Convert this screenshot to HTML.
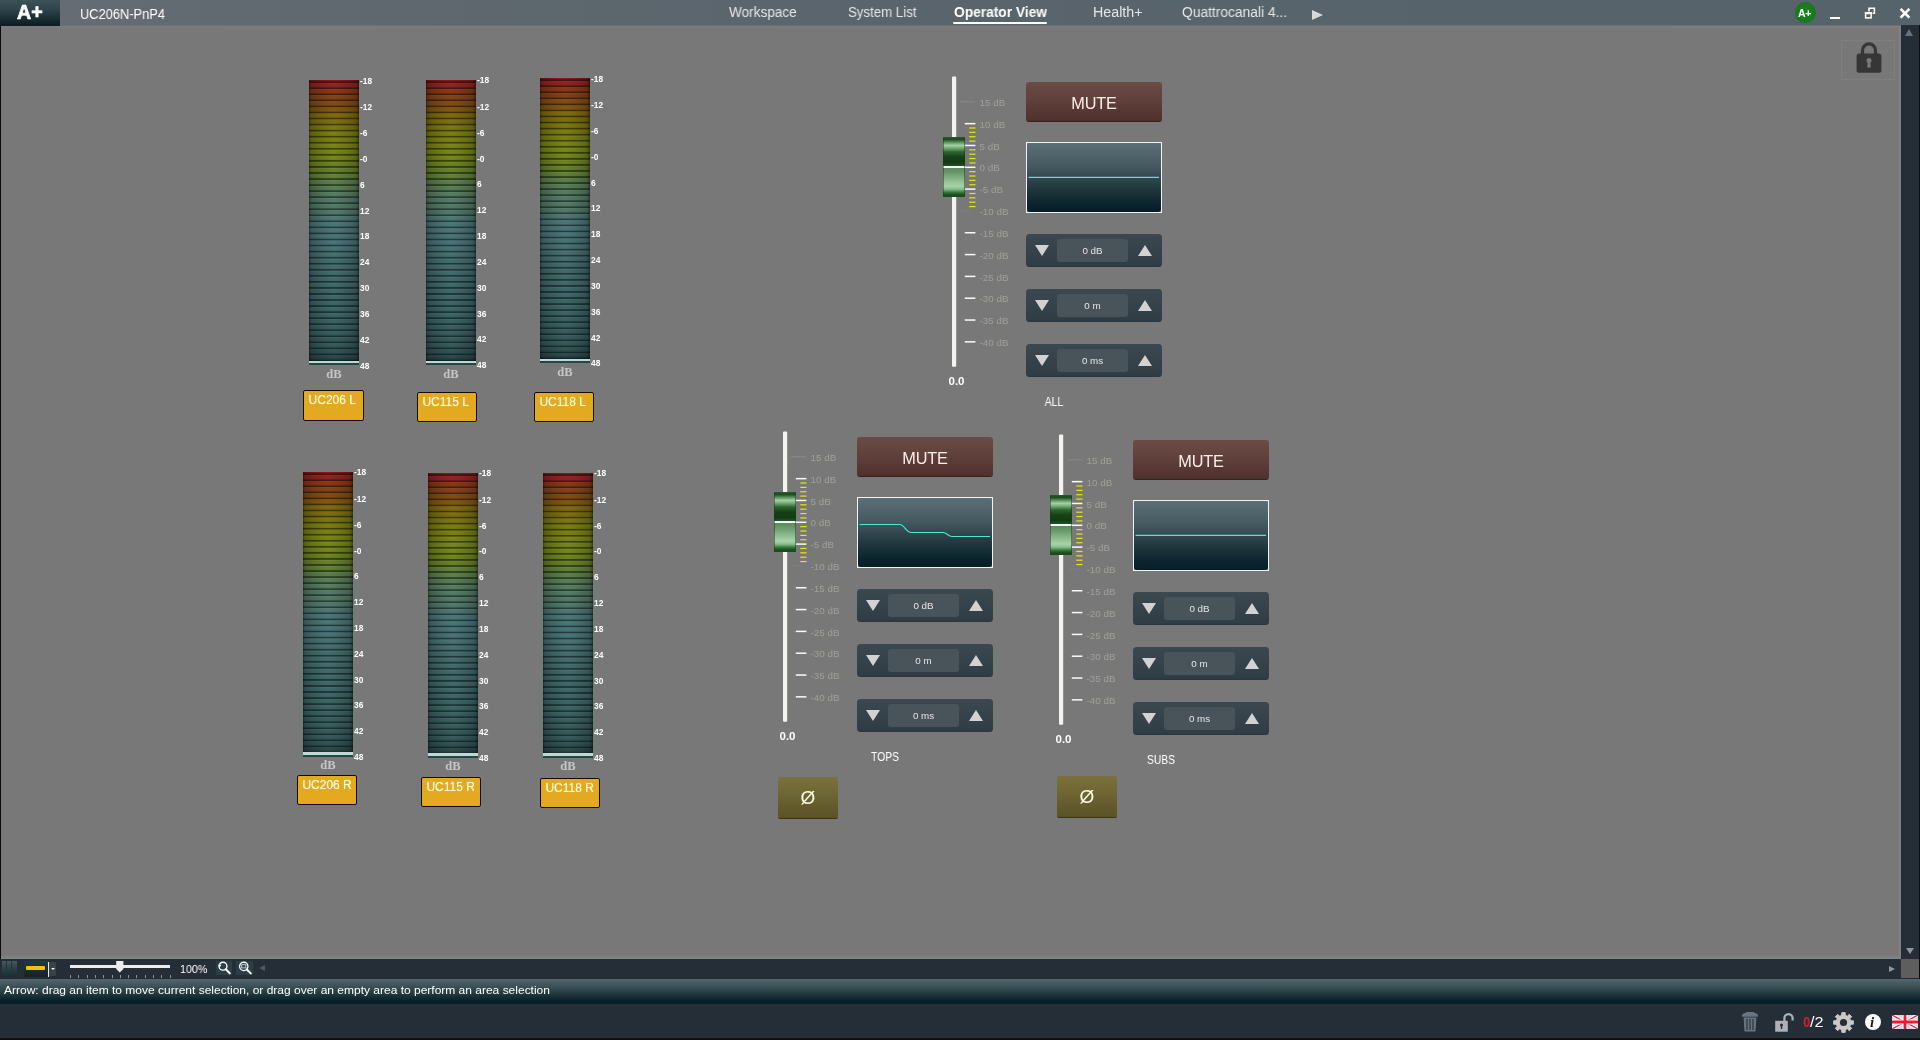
<!DOCTYPE html>
<html><head><meta charset="utf-8"><title>Operator View</title>
<style>
*{margin:0;padding:0;box-sizing:border-box}
html,body{width:1920px;height:1040px;overflow:hidden;background:#787878;font-family:"Liberation Sans",sans-serif;}
.abs,.t{position:absolute}
.t{white-space:nowrap;line-height:1;transform-origin:0 0;color:#fff;will-change:transform}
#t_logo{-webkit-text-stroke:.7px #fff}
#root{position:absolute;left:0;top:0;width:1920px;height:1040px;will-change:transform}
#topbar{position:absolute;left:0;top:0;width:1920px;height:25px;box-shadow:0 1px 0 #6a7174;background:linear-gradient(90deg,#666d74 0,#5f686f 400px,#59646c 900px,#56636b 1920px);}
#logo{position:absolute;left:0;top:0;width:60px;height:26px;background:linear-gradient(180deg,#3d5359 0,#2c4248 40%,#14282e 80%,#0c1c22 100%);}
#leftedge{position:absolute;left:0;top:26px;width:1px;height:1014px;background:#0a0a0a}
#vscroll{position:absolute;left:1901.4px;top:25px;width:18.6px;height:934px;background:#252d37}
#zoombar{position:absolute;left:0;top:959px;width:1901px;height:20px;background:#252d37}
#corner{position:absolute;left:1901px;top:959px;width:19px;height:20px;background:#5e5e5e}
#status{position:absolute;left:0;top:979px;width:1920px;height:25px;background:linear-gradient(180deg,#57676d 0,#4e6067 8%,#3e5459 26%,#2a4046 50%,#1a3238 66%,#0a222a 85%,#081e26 96%,#0c2028 100%);box-shadow:0 -1px 0 #1f2a33}
#bottom{position:absolute;left:0;top:1004px;width:1920px;height:36px;background:#252d37}
.meter{position:absolute;width:50px;height:285px;}
.meter .body{position:absolute;left:0;top:0;width:50px;height:285px;
 background:
  linear-gradient(90deg,rgba(0,0,0,.55) 0,rgba(0,0,0,.30) 3%,rgba(0,0,0,.22) 8%,rgba(0,0,0,.12) 22%,rgba(0,0,0,.04) 38%,rgba(0,0,0,0) 50%,rgba(0,0,0,.04) 62%,rgba(0,0,0,.12) 78%,rgba(0,0,0,.22) 92%,rgba(0,0,0,.32) 96%,rgba(0,0,0,.55) 100%),
  repeating-linear-gradient(180deg,rgba(0,0,0,0) 0,rgba(0,0,0,.04) 1px,rgba(0,12,8,.52) 1.8px,rgba(0,12,8,.52) 2.7px,rgba(255,255,255,.04) 3.4px,rgba(255,255,255,.03) 4px,rgba(0,0,0,0) 4.6px,rgba(0,0,0,0) 6.05px),
  linear-gradient(180deg,#8a1616 0,#902222 1.4%,#8e2620 2.5%,#8e3612 3.9%,#84401a 6%,#844a16 8%,#845410 10.2%,#826a0c 12.3%,#7e6e0e 14.4%,#7e760e 16.5%,#7c7c10 18.6%,#7a8010 20.7%,#7a8414 22.8%,#788616 24.9%,#768618 27%,#70841e 29.1%,#6a8228 31.2%,#648232 33.3%,#5e8044 35.4%,#5a7e54 37.5%,#567c64 41%,#52786a 46.2%,#4c7678 50.4%,#4a7478 54.6%,#487274 58.8%,#446c6e 63.7%,#40686a 73.5%,#3c6466 82.3%,#3a5e60 87%,#36585a 93%,#2e4e50 96.5%,#243e40 98.2%,#243e40 100%);
}
.meter .wl{position:absolute;left:0;top:280.6px;width:50px;height:2.2px;background:#c2d6d6}
.meter .bl{position:absolute;left:0;top:282.8px;width:50px;height:2.2px;background:#1f4846}
.mlab{position:absolute;font-weight:bold;font-size:8.4px;color:#fff;line-height:8px;white-space:nowrap}
.db{position:absolute;font-family:"Liberation Serif",serif;font-weight:bold;font-size:12.5px;color:#c6c6c6;line-height:1;width:50px;text-align:center}
.nm{position:absolute;width:60px;height:30px;background:#e2a921;border:1.3px solid #140c08;border-radius:2px;color:#fffcdc;font-size:12px;line-height:1;padding:3.2px 0 0 4.4px;white-space:nowrap;text-shadow:0 0 1px rgba(255,250,200,.6)}
.grp{position:absolute;left:0;top:0}
.track{position:absolute;left:952px;top:76.5px;width:4px;height:290px;background:#f4f4ee;border-radius:1px}
.tick{position:absolute;left:965px;width:10.5px;height:1.6px;background:#f8f8f8}
.tickf{position:absolute;left:960px;width:15px;height:1px;background:#848484}
.ytick{position:absolute;left:970px;width:5.5px;height:1.4px;background:#e6e600}
.slab{position:absolute;left:979.4px;font-size:9.8px;color:#a0a09a;line-height:1;white-space:nowrap;letter-spacing:.05px}
.knob{position:absolute;left:943px;top:137px;width:22px;height:60px;border-radius:1px;
 background:linear-gradient(180deg,#2a5a2c 0,#1c4a1e 4%,#6aa06c 10%,#a4d0a4 14%,#7ab07c 18%,#2c6430 25%,#174218 33%,#123a14 42%,#1f5222 48%,#f8f8f8 48.5%,#f8f8f8 52%,#5c8c5e 52.5%,#6a9a6c 60%,#8cbc8e 72%,#a8d2a8 82%,#8abc8c 87%,#3a7a3e 92%,#1c5220 96%,#174a1a 100%);
 box-shadow:inset 1px 0 0 rgba(20,60,20,.5),inset -1px 0 0 rgba(20,60,20,.5)}
.mute{position:absolute;left:1026px;top:82px;width:136px;height:39.5px;border-radius:3px;background:linear-gradient(180deg,#6a4b45 0,#5e3f3a 50%,#4f312d 96%,#2c1a18 100%);color:#ffeee8;font-size:16.3px;text-align:center;line-height:43px;letter-spacing:-.2px}
.graph{position:absolute;left:1026px;top:142px;width:136px;height:71px;border:1px solid #f2f2f2;background:#787878}
.graph i{position:absolute;left:0;top:0;right:0;bottom:0;border-radius:3px;background:linear-gradient(180deg,#5b6f76 0,#43585f 35%,#22383f 65%,#0a222b 90%,#081e27 100%)}
.graph svg{position:absolute;left:0;top:0}
.spin{position:absolute;left:1026px;width:136px;height:33px;border-radius:3.5px;background:linear-gradient(180deg,#3b4850 0,#35424a 50%,#313d45 94%,#29343c 100%)}
.spin b{position:absolute;left:31px;top:5px;width:71px;height:23px;border-radius:3px;background:#49535a;font-weight:normal;color:#e6e6e6;font-size:9.8px;text-align:center;line-height:24px}
.spin .dn{position:absolute;left:8.6px;top:10.5px;width:0;height:0;border-left:7.1px solid transparent;border-right:7.1px solid transparent;border-top:11.8px solid #d2d2d2}
.spin .up{position:absolute;left:112px;top:10.5px;width:0;height:0;border-left:7px solid transparent;border-right:7px solid transparent;border-bottom:11.5px solid #d2d2d2}
.val{position:absolute;font-weight:bold;font-size:11.5px;color:#fff;line-height:1}
.gname{position:absolute;font-size:12px;color:#fff;line-height:1;width:100px;text-align:center;transform:scaleX(.86);will-change:transform}
.phase{position:absolute;width:60px;height:41px;border-radius:2px;background:linear-gradient(180deg,#7a713c 0,#6f6634 40%,#5a5126 100%);box-shadow:0 1px 0 #3a3418;color:#fffbe6;font-size:19px;text-align:center;line-height:41px}
</style></head>
<body>
<div id="root">
<div id="topbar"></div><div id="logo"></div><div id="leftedge"></div>
<div id="zoombar"></div><div id="corner"></div><div id="status"></div><div id="bottom"></div>
<div class="t" id="t_logo" style="left:17.2px;top:2.8px;font-size:19.4px;font-weight:bold;color:#fff;transform:scaleX(1.0107)">A+</div>
<div class="t" id="t_title" style="left:80px;top:7px;font-size:14px;font-weight:normal;color:#fff;transform:scaleX(0.9178)">UC206N-PnP4</div>
<div class="t" id="t_ws" style="left:729px;top:4.5px;font-size:14px;font-weight:normal;color:#e4e7ea;transform:scaleX(0.9702)">Workspace</div>
<div class="t" id="t_sl" style="left:847.5px;top:4.5px;font-size:14px;font-weight:normal;color:#e4e7ea;transform:scaleX(0.9467)">System List</div>
<div class="t" id="t_ov" style="left:954px;top:4.5px;font-size:14px;font-weight:bold;color:#fff;transform:scaleX(0.9823)">Operator View</div>
<div class="t" id="t_hp" style="left:1093px;top:4.5px;font-size:14px;font-weight:normal;color:#e4e7ea;transform:scaleX(1.0173)">Health+</div>
<div class="t" id="t_q4" style="left:1181.7px;top:4.5px;font-size:14px;font-weight:normal;color:#e4e7ea;transform:scaleX(0.9848)">Quattrocanali 4...</div>
<div class="t" id="t_pct" style="left:180.3px;top:964px;font-size:11.5px;font-weight:normal;color:#fff;transform:scaleX(0.9279)">100%</div>
<div class="t" id="t_stat" style="left:4.4px;top:985.4px;font-size:11.5px;font-weight:normal;color:#fff;transform:scaleX(1.0429)">Arrow: drag an item to move current selection, or drag over an empty area to perform an area selection</div>
<div class="abs" style="left:953px;top:22.3px;width:94px;height:2px;background:#fff;border-radius:1px"></div>
<div class="abs" style="left:1312px;top:9.8px;width:0;height:0;border-top:5.2px solid transparent;border-bottom:5.2px solid transparent;border-left:11.2px solid #d6d8dc"></div>
<div class="abs" style="left:1794.5px;top:2px;width:21px;height:21px;border-radius:50%;background:radial-gradient(circle,#1c8422 0,#197a1e 60%,#146318 100%)"></div>
<div class="t" style="left:1798.3px;top:8px;font-size:10.5px;font-weight:bold;letter-spacing:-.3px">A+</div>
<div class="abs" style="left:1830px;top:16.5px;width:10px;height:2.5px;background:#fff"></div>
<svg class="abs" style="left:1863px;top:6px" width="14" height="14" viewBox="0 0 14 14"><path d="M6 5.4V2.3H11.4V7.2H9.6" fill="none" stroke="#fff" stroke-width="1.6"/><rect x="2.6" y="7" width="5.5" height="4.9" fill="none" stroke="#fff" stroke-width="1.5"/><rect x="1.85" y="6" width="7" height="2.2" fill="#fff"/></svg>
<svg class="abs" style="left:1898px;top:6px" width="14" height="14" viewBox="0 0 14 14"><path d="M2.6 2.8L11.4 11.6M11.4 2.8L2.6 11.6" stroke="#fff" stroke-width="2.6" fill="none"/></svg>
<div class="abs" style="left:1897.6px;top:26px;width:4px;height:933px;background:linear-gradient(90deg,#7a7c7c,#80868a)"></div>
<div class="abs" style="left:1px;top:955px;width:1900px;height:4px;background:linear-gradient(180deg,#7b7b7c,#828686)"></div>
<div class="abs" style="left:1px;top:26px;width:1897px;height:3px;background:linear-gradient(180deg,#7e7b7c,#797878)"></div>
<div id="vscroll"></div>
<div class="abs" style="left:1919px;top:25px;width:1px;height:954px;background:#0b0e12"></div>
<div class="abs" style="left:1904.6px;top:29.4px;width:0;height:0;border-left:4.6px solid transparent;border-right:4.6px solid transparent;border-bottom:7px solid #66727f"></div>
<div class="abs" style="left:1906.4px;top:948px;width:0;height:0;border-left:4px solid transparent;border-right:4px solid transparent;border-top:6.4px solid #8e98a4"></div>
<div class="abs" style="left:1841px;top:40px;width:54px;height:40px;border:1px solid rgba(140,140,140,.35)"></div>
<svg class="abs" style="left:1854px;top:40px" width="30" height="36" viewBox="0 0 30 36"><path d="M8.5 15V10.4a6.5 6.5 0 0 1 13 0V15" fill="none" stroke="#363636" stroke-width="3.2"/><rect x="2.6" y="13.6" width="24.8" height="19.2" rx="2.6" fill="#363636"/><circle cx="15" cy="20.6" r="2.5" fill="#787878"/><path d="M13.8 21h2.4l.7 6.6h-3.8z" fill="#787878"/></svg>
<div class="meter" style="left:309px;top:80.4px"><div class="body"></div><div class="wl"></div><div class="bl"></div></div>
<div class="mlab" style="left:360px;top:76.8px">-18</div>
<div class="mlab" style="left:360px;top:103.3px">-12</div>
<div class="mlab" style="left:360px;top:129.1px">-6</div>
<div class="mlab" style="left:360px;top:155.0px">-0</div>
<div class="mlab" style="left:360px;top:180.8px">6</div>
<div class="mlab" style="left:360px;top:206.6px">12</div>
<div class="mlab" style="left:360px;top:232.4px">18</div>
<div class="mlab" style="left:360px;top:258.2px">24</div>
<div class="mlab" style="left:360px;top:284.1px">30</div>
<div class="mlab" style="left:360px;top:309.9px">36</div>
<div class="mlab" style="left:360px;top:335.7px">42</div>
<div class="mlab" style="left:360px;top:361.5px">48</div>
<div class="db" style="left:309px;top:367.9px">dB</div>
<div class="nm" style="left:303.2px;top:390.2px;width:61px;height:30.6px">UC206 L</div>
<div class="meter" style="left:426px;top:80px"><div class="body"></div><div class="wl"></div><div class="bl"></div></div>
<div class="mlab" style="left:477px;top:76.4px">-18</div>
<div class="mlab" style="left:477px;top:102.9px">-12</div>
<div class="mlab" style="left:477px;top:128.7px">-6</div>
<div class="mlab" style="left:477px;top:154.6px">-0</div>
<div class="mlab" style="left:477px;top:180.4px">6</div>
<div class="mlab" style="left:477px;top:206.2px">12</div>
<div class="mlab" style="left:477px;top:232.0px">18</div>
<div class="mlab" style="left:477px;top:257.8px">24</div>
<div class="mlab" style="left:477px;top:283.7px">30</div>
<div class="mlab" style="left:477px;top:309.5px">36</div>
<div class="mlab" style="left:477px;top:335.3px">42</div>
<div class="mlab" style="left:477px;top:361.1px">48</div>
<div class="db" style="left:426px;top:367.5px">dB</div>
<div class="nm" style="left:417px;top:392px">UC115 L</div>
<div class="meter" style="left:540px;top:78.2px"><div class="body"></div><div class="wl"></div><div class="bl"></div></div>
<div class="mlab" style="left:591px;top:74.6px">-18</div>
<div class="mlab" style="left:591px;top:101.1px">-12</div>
<div class="mlab" style="left:591px;top:126.9px">-6</div>
<div class="mlab" style="left:591px;top:152.8px">-0</div>
<div class="mlab" style="left:591px;top:178.6px">6</div>
<div class="mlab" style="left:591px;top:204.4px">12</div>
<div class="mlab" style="left:591px;top:230.2px">18</div>
<div class="mlab" style="left:591px;top:256.0px">24</div>
<div class="mlab" style="left:591px;top:281.9px">30</div>
<div class="mlab" style="left:591px;top:307.7px">36</div>
<div class="mlab" style="left:591px;top:333.5px">42</div>
<div class="mlab" style="left:591px;top:359.3px">48</div>
<div class="db" style="left:540px;top:365.7px">dB</div>
<div class="nm" style="left:534px;top:392px">UC118 L</div>
<div class="meter" style="left:303px;top:471.9px"><div class="body"></div><div class="wl"></div><div class="bl"></div></div>
<div class="mlab" style="left:354px;top:468.3px">-18</div>
<div class="mlab" style="left:354px;top:494.8px">-12</div>
<div class="mlab" style="left:354px;top:520.6px">-6</div>
<div class="mlab" style="left:354px;top:546.5px">-0</div>
<div class="mlab" style="left:354px;top:572.3px">6</div>
<div class="mlab" style="left:354px;top:598.1px">12</div>
<div class="mlab" style="left:354px;top:623.9px">18</div>
<div class="mlab" style="left:354px;top:649.7px">24</div>
<div class="mlab" style="left:354px;top:675.6px">30</div>
<div class="mlab" style="left:354px;top:701.4px">36</div>
<div class="mlab" style="left:354px;top:727.2px">42</div>
<div class="mlab" style="left:354px;top:753.0px">48</div>
<div class="db" style="left:303px;top:759.4px">dB</div>
<div class="nm" style="left:297px;top:775px">UC206 R</div>
<div class="meter" style="left:428px;top:472.8px"><div class="body"></div><div class="wl"></div><div class="bl"></div></div>
<div class="mlab" style="left:479px;top:469.2px">-18</div>
<div class="mlab" style="left:479px;top:495.7px">-12</div>
<div class="mlab" style="left:479px;top:521.5px">-6</div>
<div class="mlab" style="left:479px;top:547.4px">-0</div>
<div class="mlab" style="left:479px;top:573.2px">6</div>
<div class="mlab" style="left:479px;top:599.0px">12</div>
<div class="mlab" style="left:479px;top:624.8px">18</div>
<div class="mlab" style="left:479px;top:650.6px">24</div>
<div class="mlab" style="left:479px;top:676.5px">30</div>
<div class="mlab" style="left:479px;top:702.3px">36</div>
<div class="mlab" style="left:479px;top:728.1px">42</div>
<div class="mlab" style="left:479px;top:753.9px">48</div>
<div class="db" style="left:428px;top:760.3px">dB</div>
<div class="nm" style="left:421px;top:777px">UC115 R</div>
<div class="meter" style="left:543px;top:472.8px"><div class="body"></div><div class="wl"></div><div class="bl"></div></div>
<div class="mlab" style="left:594px;top:469.2px">-18</div>
<div class="mlab" style="left:594px;top:495.7px">-12</div>
<div class="mlab" style="left:594px;top:521.5px">-6</div>
<div class="mlab" style="left:594px;top:547.4px">-0</div>
<div class="mlab" style="left:594px;top:573.2px">6</div>
<div class="mlab" style="left:594px;top:599.0px">12</div>
<div class="mlab" style="left:594px;top:624.8px">18</div>
<div class="mlab" style="left:594px;top:650.6px">24</div>
<div class="mlab" style="left:594px;top:676.5px">30</div>
<div class="mlab" style="left:594px;top:702.3px">36</div>
<div class="mlab" style="left:594px;top:728.1px">42</div>
<div class="mlab" style="left:594px;top:753.9px">48</div>
<div class="db" style="left:543px;top:760.3px">dB</div>
<div class="nm" style="left:540px;top:778px">UC118 R</div>
<div class="grp" style="transform:translate(0px,0px)">
<svg class="abs" style="left:940px;top:70px" width="50" height="310" viewBox="940 70 50 310"><rect x="952" y="76.5" width="4.2" height="290.3" rx="1" fill="#f4f4ee"/><rect x="960" y="101.33" width="15" height="1" fill="#8a8a8a"/><rect x="962" y="210.43" width="9" height="1" fill="#808080"/><rect x="969.3" y="127.41" width="6.2" height="1.2" fill="#e8e800"/><rect x="969.3" y="131.78" width="6.2" height="1.2" fill="#e8e800"/><rect x="969.3" y="136.14" width="6.2" height="1.2" fill="#e8e800"/><rect x="969.3" y="140.51" width="6.2" height="1.2" fill="#e8e800"/><rect x="969.3" y="149.23" width="6.2" height="1.2" fill="#e8e800"/><rect x="969.3" y="153.60" width="6.2" height="1.2" fill="#e8e800"/><rect x="969.3" y="157.96" width="6.2" height="1.2" fill="#e8e800"/><rect x="969.3" y="162.33" width="6.2" height="1.2" fill="#e8e800"/><rect x="969.3" y="171.05" width="6.2" height="1.2" fill="#e8e800"/><rect x="969.3" y="175.42" width="6.2" height="1.2" fill="#e8e800"/><rect x="969.3" y="179.78" width="6.2" height="1.2" fill="#e8e800"/><rect x="969.3" y="184.15" width="6.2" height="1.2" fill="#e8e800"/><rect x="969.3" y="192.87" width="6.2" height="1.2" fill="#e8e800"/><rect x="969.3" y="197.24" width="6.2" height="1.2" fill="#e8e800"/><rect x="969.3" y="201.60" width="6.2" height="1.2" fill="#e8e800"/><rect x="969.3" y="205.97" width="6.2" height="1.2" fill="#e8e800"/><rect x="964.8" y="122.90" width="10.6" height="1.5" fill="#fafafa"/><rect x="964.8" y="144.72" width="10.6" height="1.5" fill="#fafafa"/><rect x="964.8" y="166.54" width="10.6" height="1.5" fill="#fafafa"/><rect x="964.8" y="188.36" width="10.6" height="1.5" fill="#fafafa"/><rect x="964.8" y="232.00" width="10.6" height="1.5" fill="#fafafa"/><rect x="964.8" y="253.82" width="10.6" height="1.5" fill="#fafafa"/><rect x="964.8" y="275.64" width="10.6" height="1.5" fill="#fafafa"/><rect x="964.8" y="297.46" width="10.6" height="1.5" fill="#fafafa"/><rect x="964.8" y="319.28" width="10.6" height="1.5" fill="#fafafa"/><rect x="964.8" y="341.10" width="10.6" height="1.5" fill="#fafafa"/></svg>
<div class="slab" style="top:97.9px">15 dB</div>
<div class="slab" style="top:119.8px">10 dB</div>
<div class="slab" style="top:141.6px">5 dB</div>
<div class="slab" style="top:163.4px">0 dB</div>
<div class="slab" style="top:185.2px">-5 dB</div>
<div class="slab" style="top:207.0px">-10 dB</div>
<div class="slab" style="top:228.8px">-15 dB</div>
<div class="slab" style="top:250.7px">-20 dB</div>
<div class="slab" style="top:272.5px">-25 dB</div>
<div class="slab" style="top:294.3px">-30 dB</div>
<div class="slab" style="top:316.1px">-35 dB</div>
<div class="slab" style="top:338.0px">-40 dB</div>
<div class="knob"></div>
<div class="mute">MUTE</div>
<div class="graph"><i></i><svg width="134" height="69" viewBox="0 0 134 69"><path d="M1.5 34.4H132" fill="none" stroke="#4ce8d0" stroke-width="1.1"/></svg></div>
<div class="spin" style="top:234px"><i class="dn"></i><b>0 dB</b><i class="up"></i></div>
<div class="spin" style="top:289px"><i class="dn"></i><b>0 m</b><i class="up"></i></div>
<div class="spin" style="top:344px"><i class="dn"></i><b>0 ms</b><i class="up"></i></div>
<div class="val" style="left:948.5px;top:375.5px">0.0</div>
<div class="gname" style="left:1004px;top:396px">ALL</div>
</div>
<div class="grp" style="transform:translate(-169px,355px)">
<svg class="abs" style="left:940px;top:70px" width="50" height="310" viewBox="940 70 50 310"><rect x="952" y="76.5" width="4.2" height="290.3" rx="1" fill="#f4f4ee"/><rect x="960" y="101.33" width="15" height="1" fill="#8a8a8a"/><rect x="962" y="210.43" width="9" height="1" fill="#808080"/><rect x="969.3" y="127.41" width="6.2" height="1.2" fill="#e8e800"/><rect x="969.3" y="131.78" width="6.2" height="1.2" fill="#e8e800"/><rect x="969.3" y="136.14" width="6.2" height="1.2" fill="#e8e800"/><rect x="969.3" y="140.51" width="6.2" height="1.2" fill="#e8e800"/><rect x="969.3" y="149.23" width="6.2" height="1.2" fill="#e8e800"/><rect x="969.3" y="153.60" width="6.2" height="1.2" fill="#e8e800"/><rect x="969.3" y="157.96" width="6.2" height="1.2" fill="#e8e800"/><rect x="969.3" y="162.33" width="6.2" height="1.2" fill="#e8e800"/><rect x="969.3" y="171.05" width="6.2" height="1.2" fill="#e8e800"/><rect x="969.3" y="175.42" width="6.2" height="1.2" fill="#e8e800"/><rect x="969.3" y="179.78" width="6.2" height="1.2" fill="#e8e800"/><rect x="969.3" y="184.15" width="6.2" height="1.2" fill="#e8e800"/><rect x="969.3" y="192.87" width="6.2" height="1.2" fill="#e8e800"/><rect x="969.3" y="197.24" width="6.2" height="1.2" fill="#e8e800"/><rect x="969.3" y="201.60" width="6.2" height="1.2" fill="#e8e800"/><rect x="969.3" y="205.97" width="6.2" height="1.2" fill="#e8e800"/><rect x="964.8" y="122.90" width="10.6" height="1.5" fill="#fafafa"/><rect x="964.8" y="144.72" width="10.6" height="1.5" fill="#fafafa"/><rect x="964.8" y="166.54" width="10.6" height="1.5" fill="#fafafa"/><rect x="964.8" y="188.36" width="10.6" height="1.5" fill="#fafafa"/><rect x="964.8" y="232.00" width="10.6" height="1.5" fill="#fafafa"/><rect x="964.8" y="253.82" width="10.6" height="1.5" fill="#fafafa"/><rect x="964.8" y="275.64" width="10.6" height="1.5" fill="#fafafa"/><rect x="964.8" y="297.46" width="10.6" height="1.5" fill="#fafafa"/><rect x="964.8" y="319.28" width="10.6" height="1.5" fill="#fafafa"/><rect x="964.8" y="341.10" width="10.6" height="1.5" fill="#fafafa"/></svg>
<div class="slab" style="top:97.9px">15 dB</div>
<div class="slab" style="top:119.8px">10 dB</div>
<div class="slab" style="top:141.6px">5 dB</div>
<div class="slab" style="top:163.4px">0 dB</div>
<div class="slab" style="top:185.2px">-5 dB</div>
<div class="slab" style="top:207.0px">-10 dB</div>
<div class="slab" style="top:228.8px">-15 dB</div>
<div class="slab" style="top:250.7px">-20 dB</div>
<div class="slab" style="top:272.5px">-25 dB</div>
<div class="slab" style="top:294.3px">-30 dB</div>
<div class="slab" style="top:316.1px">-35 dB</div>
<div class="slab" style="top:338.0px">-40 dB</div>
<div class="knob"></div>
<div class="mute">MUTE</div>
<div class="graph"><i></i><svg width="134" height="69" viewBox="0 0 134 69"><path d="M1.5 26.5H42C46 26.5 48.5 34.5 53 34.5H85C89 34.5 90 38.5 94 38.5H132" fill="none" stroke="#4ce8d0" stroke-width="1.1"/></svg></div>
<div class="spin" style="top:234px"><i class="dn"></i><b>0 dB</b><i class="up"></i></div>
<div class="spin" style="top:289px"><i class="dn"></i><b>0 m</b><i class="up"></i></div>
<div class="spin" style="top:344px"><i class="dn"></i><b>0 ms</b><i class="up"></i></div>
<div class="val" style="left:948.5px;top:375.5px">0.0</div>
<div class="gname" style="left:1004px;top:396px">TOPS</div>
</div>
<div class="grp" style="transform:translate(107px,358px)">
<svg class="abs" style="left:940px;top:70px" width="50" height="310" viewBox="940 70 50 310"><rect x="952" y="76.5" width="4.2" height="290.3" rx="1" fill="#f4f4ee"/><rect x="960" y="101.33" width="15" height="1" fill="#8a8a8a"/><rect x="962" y="210.43" width="9" height="1" fill="#808080"/><rect x="969.3" y="127.41" width="6.2" height="1.2" fill="#e8e800"/><rect x="969.3" y="131.78" width="6.2" height="1.2" fill="#e8e800"/><rect x="969.3" y="136.14" width="6.2" height="1.2" fill="#e8e800"/><rect x="969.3" y="140.51" width="6.2" height="1.2" fill="#e8e800"/><rect x="969.3" y="149.23" width="6.2" height="1.2" fill="#e8e800"/><rect x="969.3" y="153.60" width="6.2" height="1.2" fill="#e8e800"/><rect x="969.3" y="157.96" width="6.2" height="1.2" fill="#e8e800"/><rect x="969.3" y="162.33" width="6.2" height="1.2" fill="#e8e800"/><rect x="969.3" y="171.05" width="6.2" height="1.2" fill="#e8e800"/><rect x="969.3" y="175.42" width="6.2" height="1.2" fill="#e8e800"/><rect x="969.3" y="179.78" width="6.2" height="1.2" fill="#e8e800"/><rect x="969.3" y="184.15" width="6.2" height="1.2" fill="#e8e800"/><rect x="969.3" y="192.87" width="6.2" height="1.2" fill="#e8e800"/><rect x="969.3" y="197.24" width="6.2" height="1.2" fill="#e8e800"/><rect x="969.3" y="201.60" width="6.2" height="1.2" fill="#e8e800"/><rect x="969.3" y="205.97" width="6.2" height="1.2" fill="#e8e800"/><rect x="964.8" y="122.90" width="10.6" height="1.5" fill="#fafafa"/><rect x="964.8" y="144.72" width="10.6" height="1.5" fill="#fafafa"/><rect x="964.8" y="166.54" width="10.6" height="1.5" fill="#fafafa"/><rect x="964.8" y="188.36" width="10.6" height="1.5" fill="#fafafa"/><rect x="964.8" y="232.00" width="10.6" height="1.5" fill="#fafafa"/><rect x="964.8" y="253.82" width="10.6" height="1.5" fill="#fafafa"/><rect x="964.8" y="275.64" width="10.6" height="1.5" fill="#fafafa"/><rect x="964.8" y="297.46" width="10.6" height="1.5" fill="#fafafa"/><rect x="964.8" y="319.28" width="10.6" height="1.5" fill="#fafafa"/><rect x="964.8" y="341.10" width="10.6" height="1.5" fill="#fafafa"/></svg>
<div class="slab" style="top:97.9px">15 dB</div>
<div class="slab" style="top:119.8px">10 dB</div>
<div class="slab" style="top:141.6px">5 dB</div>
<div class="slab" style="top:163.4px">0 dB</div>
<div class="slab" style="top:185.2px">-5 dB</div>
<div class="slab" style="top:207.0px">-10 dB</div>
<div class="slab" style="top:228.8px">-15 dB</div>
<div class="slab" style="top:250.7px">-20 dB</div>
<div class="slab" style="top:272.5px">-25 dB</div>
<div class="slab" style="top:294.3px">-30 dB</div>
<div class="slab" style="top:316.1px">-35 dB</div>
<div class="slab" style="top:338.0px">-40 dB</div>
<div class="knob"></div>
<div class="mute">MUTE</div>
<div class="graph"><i></i><svg width="134" height="69" viewBox="0 0 134 69"><path d="M1.5 34.4H132" fill="none" stroke="#4ce8d0" stroke-width="1.1"/></svg></div>
<div class="spin" style="top:234px"><i class="dn"></i><b>0 dB</b><i class="up"></i></div>
<div class="spin" style="top:289px"><i class="dn"></i><b>0 m</b><i class="up"></i></div>
<div class="spin" style="top:344px"><i class="dn"></i><b>0 ms</b><i class="up"></i></div>
<div class="val" style="left:948.5px;top:375.5px">0.0</div>
<div class="gname" style="left:1004px;top:396px">SUBS</div>
</div>
<div class="phase" style="left:778px;top:777px">Ø</div>
<div class="phase" style="left:1057px;top:776px">Ø</div>
<div class="abs" style="left:1.5px;top:961px;width:15px;height:15.8px;background:linear-gradient(180deg,#485a5e 0,#2c4246 45%,#182c30 100%)"></div>
<div class="abs" style="left:6px;top:961px;width:1px;height:16px;background:#223438"></div><div class="abs" style="left:11px;top:961px;width:1px;height:16px;background:#223438"></div>
<div class="abs" style="left:23.6px;top:961px;width:24.4px;height:15.6px;background:linear-gradient(180deg,#24393d 0,#0e2428 100%)"></div>
<div class="abs" style="left:49px;top:961.6px;width:6.6px;height:14.6px;background:#36444a"></div>
<div class="abs" style="left:26.2px;top:966.3px;width:19px;height:4.2px;background:#f2c200;border-radius:1px"></div>
<div class="abs" style="left:48.2px;top:961.5px;width:1px;height:15px;background:#e8e8e8"></div>
<div class="abs" style="left:50.6px;top:967.6px;width:0;height:0;border-left:2.2px solid transparent;border-right:2.2px solid transparent;border-top:2.6px solid #fff"></div>
<div class="abs" style="left:70px;top:964.8px;width:99.5px;height:3.4px;background:#ececec"></div>
<svg class="abs" style="left:115px;top:960px" width="10" height="14" viewBox="0 0 10 14"><path d="M1.2 1h7.2v8L4.8 12.6 1.2 9z" fill="#ececec"/></svg>
<div class="abs" style="left:70.0px;top:974.8px;width:1px;height:3px;background:#8a949a"></div>
<div class="abs" style="left:78.3px;top:974.8px;width:1px;height:3px;background:#8a949a"></div>
<div class="abs" style="left:86.6px;top:974.8px;width:1px;height:3px;background:#8a949a"></div>
<div class="abs" style="left:94.9px;top:974.8px;width:1px;height:3px;background:#8a949a"></div>
<div class="abs" style="left:103.2px;top:974.8px;width:1px;height:3px;background:#8a949a"></div>
<div class="abs" style="left:111.5px;top:974.8px;width:1px;height:3px;background:#8a949a"></div>
<div class="abs" style="left:119.8px;top:974.8px;width:1px;height:3px;background:#8a949a"></div>
<div class="abs" style="left:128.1px;top:974.8px;width:1px;height:3px;background:#8a949a"></div>
<div class="abs" style="left:136.4px;top:974.8px;width:1px;height:3px;background:#8a949a"></div>
<div class="abs" style="left:144.7px;top:974.8px;width:1px;height:3px;background:#8a949a"></div>
<div class="abs" style="left:153.0px;top:974.8px;width:1px;height:3px;background:#8a949a"></div>
<div class="abs" style="left:161.3px;top:974.8px;width:1px;height:3px;background:#8a949a"></div>
<div class="abs" style="left:169.6px;top:974.8px;width:1px;height:3px;background:#8a949a"></div>
<div class="abs" style="left:215.8px;top:960.8px;width:16.2px;height:14.6px;background:#2b3e45"></div>
<svg class="abs" style="left:215.8px;top:960.3px" width="16" height="16" viewBox="0 0 17 17"><circle cx="7.4" cy="6.6" r="4.2" fill="none" stroke="#fff" stroke-width="1.5"/><path d="M10.4 9.8L14.6 14" stroke="#fff" stroke-width="2.2" stroke-linecap="round"/><path d="M2.2 5.2l2 2.6 1.6-2.8z" fill="#fff"/></svg>
<div class="abs" style="left:236.3px;top:960.8px;width:16.5px;height:14.6px;background:#2b3e45"></div>
<svg class="abs" style="left:236.5px;top:960.3px" width="16" height="16" viewBox="0 0 17 17"><circle cx="7.2" cy="6.8" r="4.4" fill="none" stroke="#fff" stroke-width="1.4"/><path d="M10.4 10L14.6 14.2" stroke="#fff" stroke-width="2.2" stroke-linecap="round"/><rect x="5" y="5" width="4.4" height="3.4" fill="none" stroke="#dfe6e8" stroke-width=".9"/></svg>
<div class="abs" style="left:259px;top:965.3px;width:0;height:0;border-top:3.7px solid transparent;border-bottom:3.7px solid transparent;border-right:6.4px solid #4e5862"></div>
<div class="abs" style="left:1889.2px;top:965.6px;width:0;height:0;border-top:3.7px solid transparent;border-bottom:3.7px solid transparent;border-left:6.4px solid #8e98a4"></div>
<svg class="abs" style="left:1740px;top:1011px" width="20" height="22" viewBox="0 0 20 22"><path d="M2 4.2c0-1.2 1.6-1.8 3.4-2.2L6.4 1h7.2l1 1c1.8.4 3.4 1 3.4 2.2v1.6H2z" fill="#687480"/><path d="M3.6 6.6h12.8l-.9 14H4.5z" fill="#687480"/><path d="M7 8v11M10 8v11M13 8v11" stroke="#252d37" stroke-width="1.1"/></svg>
<svg class="abs" style="left:1774px;top:1012px" width="21" height="21" viewBox="0 0 21 21"><path d="M10.4 9.4V6.2a4.1 4.1 0 0 1 8.2 0V8.6" fill="none" stroke="#aeb2b6" stroke-width="2.2"/><rect x="1.2" y="8.8" width="12.6" height="10.9" fill="#aeb2b6"/><circle cx="7.5" cy="13" r="1.5" fill="#252d37"/><rect x="6.8" y="13" width="1.4" height="4" fill="#252d37"/></svg>
<div class="t" style="left:1802.6px;top:1014.6px;font-size:14.5px;color:#d3222a;font-weight:bold;transform:scaleX(.9)">0</div>
<div class="t" style="left:1810px;top:1014.6px;font-size:14.5px;color:#fff;font-style:italic;transform:scaleX(1.12)"><span style="font-style:normal">/2</span></div>
<svg class="abs" style="left:1832.6px;top:1011.8px" width="21" height="21" viewBox="0 0 21 21"><path d="M20.35 8.78L20.35 12.22L17.70 12.23L16.81 14.37L18.68 16.25L16.25 18.68L14.37 16.81L12.23 17.70L12.22 20.35L8.78 20.35L8.77 17.70L6.63 16.81L4.75 18.68L2.32 16.25L4.19 14.37L3.30 12.23L0.65 12.22L0.65 8.78L3.30 8.77L4.19 6.63L2.32 4.75L4.75 2.32L6.63 4.19L8.77 3.30L8.78 0.65L12.22 0.65L12.23 3.30L14.37 4.19L16.25 2.32L18.68 4.75L16.81 6.63L17.70 8.77Z" fill="#c9c9c9" stroke="#c9c9c9" stroke-width="1" stroke-linejoin="round"/><circle cx="10.5" cy="10.5" r="3.6" fill="#252d37"/></svg>
<div class="abs" style="left:1865.3px;top:1013.8px;width:16px;height:16px;border-radius:50%;background:#fff"></div>
<div class="t" style="left:1870.4px;top:1014.6px;font-family:'Liberation Serif',serif;font-style:italic;font-weight:bold;font-size:15px;color:#1a1a1a">i</div>
<svg class="abs" style="left:1892px;top:1015px" width="26" height="14" viewBox="0 0 26 14"><rect width="26" height="14" fill="#d8d0ea"/><path d="M0 0L26 14M26 0L0 14" stroke="#fff" stroke-width="3.4"/><path d="M0 0L26 14M26 0L0 14" stroke="#e8203a" stroke-width="1.3"/><path d="M13 0V14M0 7H26" stroke="#fff" stroke-width="5"/><path d="M13 0V14M0 7H26" stroke="#f01830" stroke-width="2.8"/></svg>
<div class="abs" style="left:0;top:1038px;width:1920px;height:2px;background:#0c1014"></div>
</div>
</body></html>
